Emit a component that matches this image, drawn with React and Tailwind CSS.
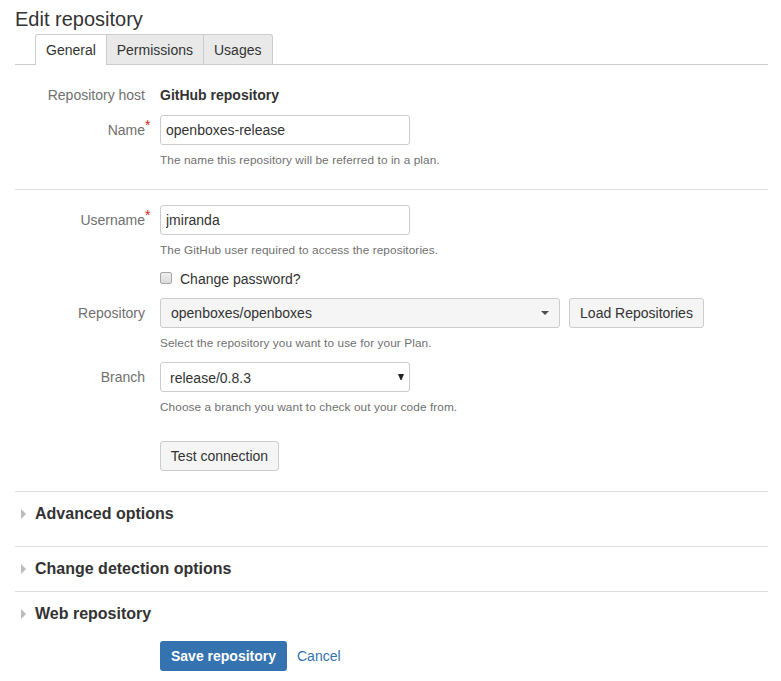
import React from "react";

const tabs = [
  { name: "General", width: "w-[72px] pl-[10px]", active: true },
  { name: "Permissions", width: "w-[97px] pl-[9.75px]" },
  { name: "Usages", width: "w-[69px] pl-[10px]" },
];

const sections = [
  { name: "Advanced options", height: "h-[55px]" },
  { name: "Change detection options", height: "h-[45px]" },
  { name: "Web repository", height: "h-[49px]" },
];

const Field = ({ label, required, help, className = "", children }) => (
  <div className={`flex ${className}`}>
    <div className="relative w-[130px] shrink-0 pt-[5px] text-right text-[#707070]">
      {label}
      {/* REQUIRED MARK */}
      {required && (
        <span className="absolute left-full top-0 text-[#d01f10]">*</span>
      )}
    </div>
    <div className="ml-[15px]">
      {children}
      {help && (
        <p className="mt-[5px] text-[11.8px] leading-5 tracking-[0.09px] text-[#707070]">
          {help}
        </p>
      )}
    </div>
  </div>
);

const Button = ({ className = "", children }) => (
  <button
    type="button"
    className={`h-[30px] rounded-[3px] border border-[#ccc] bg-[#f5f5f5] whitespace-nowrap text-center ${className}`}
  >
    {children}
  </button>
);

const App = () => {
  return (
    <div className="h-[681px] w-[781px] overflow-hidden bg-white pl-[15px] font-['Liberation_Sans',Arial,sans-serif] text-[14px] leading-5 text-[#333]">
      <div className="w-[753px]">
        <h1 className="h-[34px] pt-[7px] text-[20px] leading-6">
          Edit repository
        </h1>

        {/* TABS */}
        <div className="flex h-[31px] border-b border-[#ccc] pl-5">
          {tabs.map((tab) => (
            <button
              key={tab.name}
              type="button"
              className={`border-t border-r border-[#ccc] text-left last:rounded-tr-[3px] ${tab.width} ${
                tab.active
                  ? "h-[31px] rounded-tl-[3px] border-l bg-white"
                  : "h-[30px] bg-[#e9e9e9]"
              }`}
            >
              {tab.name}
            </button>
          ))}
        </div>

        {/* GENERAL */}
        <div className="h-[125px] border-b border-[#ddd] pt-[15px]">
          <Field label="Repository host" className="h-[35px]">
            <p className="pt-[5px] font-bold">GitHub repository</p>
          </Field>
          <Field
            label="Name"
            required
            help="The name this repository will be referred to in a plan."
          >
            <input
              defaultValue="openboxes-release"
              className="block h-[30px] w-[250px] rounded-[3px] border border-[#ccc] px-[5px]"
            />
          </Field>
        </div>

        {/* CONNECTION */}
        <div className="h-[302px] border-b border-[#ddd] pt-[15px]">
          <Field
            label="Username"
            required
            help="The GitHub user required to access the repositories."
            className="h-[64px]"
          >
            <input
              defaultValue="jmiranda"
              className="block h-[30px] w-[250px] rounded-[3px] border border-[#ccc] px-[5px]"
            />
          </Field>
          <label className="ml-[145px] flex h-[29px] w-fit">
            <input
              type="checkbox"
              className="mt-[3px] h-3 w-3 appearance-none rounded-[2px] border border-[#a6a6a6] bg-linear-to-b from-[#ededed] to-[#dcdcdc]"
            />
            <span className="ml-2">Change password?</span>
          </label>
          <Field
            label="Repository"
            help="Select the repository you want to use for your Plan."
            className="h-[64px]"
          >
            <div className="flex gap-[9px]">
              <div className="flex h-[30px] w-[400px] items-center justify-between rounded-[3px] border border-[#ccc] bg-[#f5f5f5] px-[10px]">
                <span>openboxes/openboxes</span>
                <svg width="8" height="4" viewBox="0 0 8 4" fill="#4d4d4d">
                  <path d="M0 0h8L4 4z" />
                </svg>
              </div>
              <Button className="w-[135px]">Load Repositories</Button>
            </div>
          </Field>
          <Field
            label="Branch"
            help="Choose a branch you want to check out your code from."
            className="h-[79px]"
          >
            <div className="flex h-[30px] w-[250px] items-center justify-between rounded-[3px] border border-[#ccc] bg-white pr-[5px] pl-[9px]">
              <span className="pt-[2px]">release/0.8.3</span>
              <svg width="6" height="6" viewBox="0 0 6 6" fill="#222">
                <path d="M0 0h6L3.5 6h-1z" />
              </svg>
            </div>
          </Field>
          <Button className="ml-[145px] w-[119px]">Test connection</Button>
        </div>

        {/* COLLAPSED SECTIONS */}
        {sections.map((section) => (
          <div
            key={section.name}
            className={`flex border-b border-[#ddd] pt-[11px] pl-[6px] last-of-type:border-b-0 ${section.height}`}
          >
            <svg
              width="5"
              height="10"
              viewBox="0 0 5 10"
              fill="#bbb"
              className="mt-[6px]"
            >
              <path d="M0 0l5 5-5 5z" />
            </svg>
            <h2 className="ml-[9px] text-[16px] leading-[22px] font-bold">
              {section.name}
            </h2>
          </div>
        ))}

        {/* ACTIONS */}
        <footer className="flex items-center pl-[145px]">
          <button
            type="button"
            className="h-[30px] w-[127px] rounded-[3px] bg-[#3572b0] text-center font-bold whitespace-nowrap text-white"
          >
            Save repository
          </button>
          <a href="#" className="ml-[10px] text-[#3572b0]">
            Cancel
          </a>
        </footer>
      </div>
    </div>
  );
};

export default App;
